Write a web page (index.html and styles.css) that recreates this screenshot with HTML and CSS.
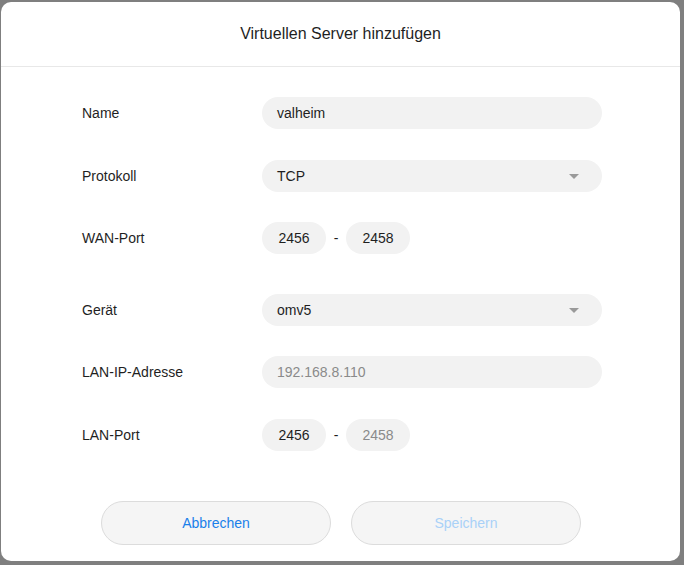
FILE: index.html
```html
<!DOCTYPE html>
<html lang="de">
<head>
<meta charset="utf-8">
<title>Virtuellen Server hinzufügen</title>
<link rel="stylesheet" href="styles.css">
</head>
<body>
<div class="dialog">
  <div class="header">Virtuellen Server hinzufügen</div>
  <div class="form">
    <div class="row first">
      <div class="label">Name</div>
      <div class="field wide">valheim</div>
    </div>
    <div class="row">
      <div class="label">Protokoll</div>
      <div class="field wide select">TCP<span class="caret"></span></div>
    </div>
    <div class="row">
      <div class="label">WAN-Port</div>
      <div class="ports">
        <div class="field port">2456</div>
        <span class="dash">-</span>
        <div class="field port">2458</div>
      </div>
    </div>
    <div class="row gap-lg">
      <div class="label">Gerät</div>
      <div class="field wide select">omv5<span class="caret"></span></div>
    </div>
    <div class="row">
      <div class="label">LAN-IP-Adresse</div>
      <div class="field wide muted">192.168.8.110</div>
    </div>
    <div class="row gap-sm">
      <div class="label">LAN-Port</div>
      <div class="ports">
        <div class="field port">2456</div>
        <span class="dash">-</span>
        <div class="field port muted">2458</div>
      </div>
    </div>
  </div>
  <div class="actions">
    <button class="btn cancel">Abbrechen</button>
    <button class="btn save">Speichern</button>
  </div>
</div>
</body>
</html>
```
FILE: styles.css
```css
html, body {
  margin: 0;
  padding: 0;
}
body {
  background: #7f7f7f;
  font-family: "Liberation Sans", Arial, sans-serif;
  color: #222;
  height: 565px;
  overflow: hidden;
}
.dialog {
  margin: 2px 4px 0 1px;
  height: 559px;
  background: #fff;
  border-radius: 10px;
  display: flex;
  flex-direction: column;
}
.header {
  height: 64px;
  line-height: 64px;
  text-align: center;
  font-size: 16px;
  color: #1f1f1f;
  border-bottom: 1px solid #e8e8e8;
}
.form {
  padding: 30px 0 0 81px;
  display: flex;
  flex-direction: column;
}
.row {
  display: flex;
  align-items: center;
  height: 32px;
  margin-bottom: 30px;
}
.row.first {
  margin-bottom: 31px;
}
.row.gap-lg {
  margin-top: 10px;
}
.row.gap-sm {
  margin-top: 1px;
  margin-bottom: 0;
}
.label {
  width: 180px;
  font-size: 14px;
  color: #1f1f1f;
}
.field {
  height: 32px;
  line-height: 32px;
  background: #f2f2f2;
  border-radius: 16px;
  font-size: 14px;
  color: #1f1f1f;
  box-sizing: border-box;
}
.wide {
  width: 340px;
  padding-left: 15px;
}
.select {
  position: relative;
}
.caret {
  position: absolute;
  right: 23px;
  top: 14px;
  width: 0;
  height: 0;
  border-left: 5px solid transparent;
  border-right: 5px solid transparent;
  border-top: 5px solid #9a9a9a;
}
.muted {
  color: #8a8a8a;
}
.ports {
  display: flex;
  align-items: center;
}
.port {
  width: 64px;
  text-align: center;
}
.dash {
  width: 20px;
  text-align: center;
  font-size: 14px;
  color: #1f1f1f;
}
.actions {
  display: flex;
  justify-content: center;
  gap: 20px;
  margin-top: 50px;
  padding-left: 1px;
}
.btn {
  width: 230px;
  height: 44px;
  border-radius: 22px;
  border: 1px solid #dcdcdc;
  background: #f5f5f5;
  font-family: "Liberation Sans", Arial, sans-serif;
  font-size: 14px;
  padding: 0;
}
.cancel {
  color: #1a80ea;
}
.save {
  color: #a9d1f8;
}
```
